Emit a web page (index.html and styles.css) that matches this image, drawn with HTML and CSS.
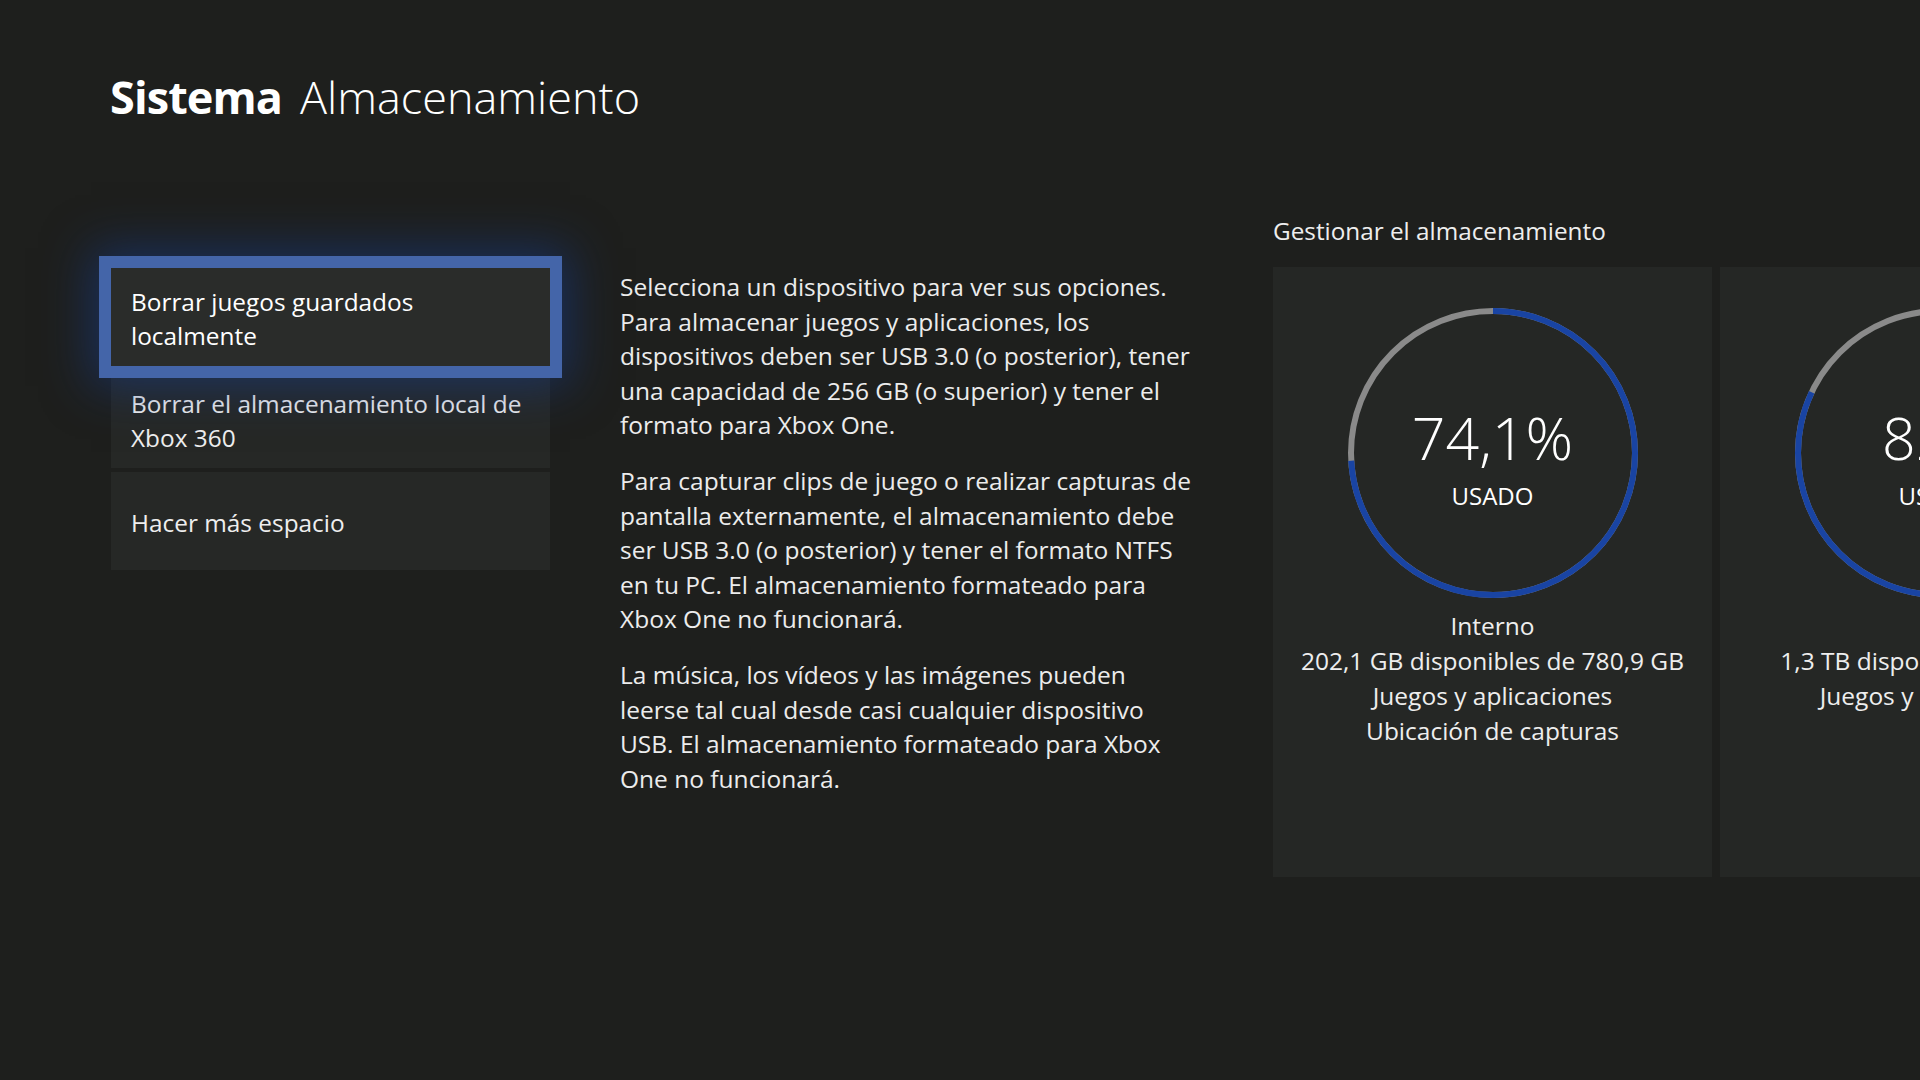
FILE: index.html
```html
<!DOCTYPE html>
<html lang="es">
<head>
<meta charset="utf-8">
<title>Sistema Almacenamiento</title>
<link rel="stylesheet" href="styles.css">
</head>
<body>
<div class="page">
  <h1 class="title"><span class="title-main">Sistema</span><span class="title-sub">Almacenamiento</span></h1>
  <div class="content">
    <nav class="menu">
      <div class="menu-item focused">Borrar juegos guardados<br>localmente</div>
      <div class="menu-item">Borrar el almacenamiento local de<br>Xbox 360</div>
      <div class="menu-item">Hacer más espacio</div>
    </nav>
    <div class="desc">
      <p>Selecciona un dispositivo para ver sus opciones.<br>Para almacenar juegos y aplicaciones, los<br>dispositivos deben ser USB 3.0 (o posterior), tener<br>una capacidad de 256 GB (o superior) y tener el<br>formato para Xbox One.</p>
      <p>Para capturar clips de juego o realizar capturas de<br>pantalla externamente, el almacenamiento debe<br>ser USB 3.0 (o posterior) y tener el formato NTFS<br>en tu PC. El almacenamiento formateado para<br>Xbox One no funcionará.</p>
      <p>La música, los vídeos y las imágenes pueden<br>leerse tal cual desde casi cualquier dispositivo<br>USB. El almacenamiento formateado para Xbox<br>One no funcionará.</p>
    </div>
    <section class="storage">
      <h2 class="storage-heading">Gestionar el almacenamiento</h2>
      <div class="cards">
        <div class="card">
          <div class="gauge">
            <svg class="ring" width="290" height="290" viewBox="0 0 290 290">
              <circle class="ring-track" cx="145" cy="145" r="142"></circle>
              <circle class="ring-used" cx="145" cy="145" r="142" stroke-dasharray="661.1 1000" transform="rotate(-90 145 145)"></circle>
            </svg>
            <div class="gauge-text">
              <div class="gauge-value">74,1%</div>
              <div class="gauge-label">USADO</div>
            </div>
          </div>
          <div class="card-info">
            <div>Interno</div>
            <div>202,1 GB disponibles de 780,9 GB</div>
            <div>Juegos y aplicaciones</div>
            <div>Ubicación de capturas</div>
          </div>
        </div>
        <div class="card">
          <div class="gauge">
            <svg class="ring" width="290" height="290" viewBox="0 0 290 290">
              <circle class="ring-track" cx="145" cy="145" r="142"></circle>
              <circle class="ring-used" cx="145" cy="145" r="142" stroke-dasharray="731.6 1000" transform="rotate(-90 145 145)"></circle>
            </svg>
            <div class="gauge-text">
              <div class="gauge-value">82%</div>
              <div class="gauge-label">USADO</div>
            </div>
          </div>
          <div class="card-info">
            <div>ext</div>
            <div>1,3 TB disponibles de 7,3 TB</div>
            <div>Juegos y aplicaciones</div>
          </div>
        </div>
      </div>
    </section>
  </div>
</div>
</body>
</html>
```
FILE: styles.css
```css
html, body {
  margin: 0;
  padding: 0;
  width: 1920px;
  height: 1080px;
  overflow: hidden;
  background: #1e1f1d;
  color: #ffffff;
  font-family: "Open Sans", "Noto Sans", sans-serif;
}

.page {
  padding-left: 111px;
}

.title {
  margin: 67px 0 0 -1px;
  display: flex;
  gap: 18px;
  font-size: 45px;
  line-height: 60px;
  font-weight: 300;
  color: #ffffff;
}

.title-main {
  font-weight: 700;
  letter-spacing: -0.9px;
}

.title-sub {
  font-weight: 300;
}

.content {
  display: flex;
  align-items: flex-start;
  margin-top: 87px;
}

.menu {
  width: 439px;
  margin-top: 54px;
  display: flex;
  flex-direction: column;
  gap: 4px;
  flex: 0 0 439px;
}

.menu-item {
  height: 98px;
  box-sizing: border-box;
  padding: 3px 0 0 20px;
  display: flex;
  align-items: center;
  background: #262826;
  color: #eeeeee;
  font-size: 24.4px;
  line-height: 34px;
}

.menu-item.focused {
  background: #2a2c2a;
  color: #ffffff;
  box-shadow: 0 0 0 12px #4465a9, 0 0 44px 20px rgba(22, 60, 140, 0.55);
  position: relative;
  z-index: 1;
}

.desc {
  margin-left: 70px;
  margin-top: 56px;
  width: 590px;
  flex: 0 0 590px;
  color: #ececec;
  font-size: 24.5px;
  line-height: 34.6px;
  white-space: nowrap;
}

.desc p {
  margin: 0 0 21px 0;
}

.storage {
  margin-left: 63px;
  flex: 0 0 auto;
}

.storage-heading {
  margin: 0 0 19px 0;
  font-size: 24.3px;
  line-height: 34px;
  font-weight: 400;
  color: #eeeeee;
}

.cards {
  display: flex;
  gap: 8px;
}

.card {
  width: 439px;
  height: 610px;
  flex: 0 0 439px;
  background: #252725;
  box-sizing: border-box;
  padding-top: 41px;
  display: flex;
  flex-direction: column;
  align-items: center;
}

.gauge {
  display: grid;
  width: 290px;
  height: 290px;
}

.ring,
.gauge-text {
  grid-area: 1 / 1;
}

.ring-track {
  fill: none;
  stroke: #8a8a8a;
  stroke-width: 6;
}

.ring-used {
  fill: none;
  stroke: #1944a3;
  stroke-width: 6;
}

.gauge-text {
  display: flex;
  flex-direction: column;
  align-items: center;
  padding-top: 96px;
}

.gauge-value {
  font-size: 59px;
  line-height: 66px;
  font-weight: 300;
  color: #ffffff;
}

.gauge-label {
  margin-top: 11px;
  font-size: 24px;
  line-height: 30px;
  color: #ffffff;
}

.card-info {
  margin-top: 10px;
  text-align: center;
  font-size: 24.5px;
  line-height: 35px;
  color: #eeeeee;
  white-space: nowrap;
}
```
